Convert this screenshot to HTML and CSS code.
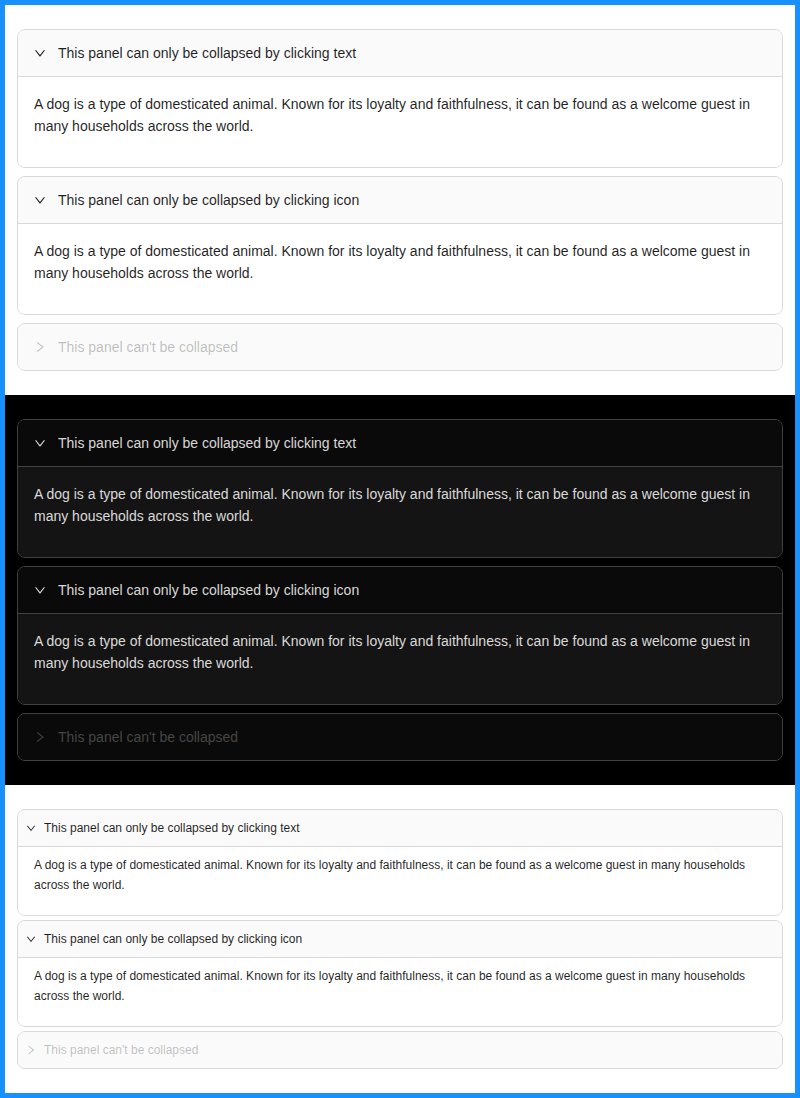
FILE: index.html
```html
<!DOCTYPE html>
<html>
<head>
<meta charset="utf-8">
<link rel="stylesheet" href="styles.css">
</head>
<body>
<div class="frame">
  <section class="demo light">
    <div class="panel">
      <div class="header"><svg class="arrow open" viewBox="64 64 896 896"><path d="M765.7 486.8L314.9 134.7A7.97 7.97 0 00302 141v77.3c0 4.9 2.3 9.6 6.1 12.6l360 281.1-360 281.1c-3.9 3-6.1 7.7-6.1 12.6V883c0 6.7 7.7 10.4 12.9 6.3l450.8-352.1a31.96 31.96 0 000-50.4z"/></svg><span>This panel can only be collapsed by clicking text</span></div>
      <div class="content"><p>A dog is a type of domesticated animal. Known for its loyalty and faithfulness, it can be found as a welcome guest in many households across the world.</p></div>
    </div>
    <div class="panel">
      <div class="header"><svg class="arrow open" viewBox="64 64 896 896"><path d="M765.7 486.8L314.9 134.7A7.97 7.97 0 00302 141v77.3c0 4.9 2.3 9.6 6.1 12.6l360 281.1-360 281.1c-3.9 3-6.1 7.7-6.1 12.6V883c0 6.7 7.7 10.4 12.9 6.3l450.8-352.1a31.96 31.96 0 000-50.4z"/></svg><span>This panel can only be collapsed by clicking icon</span></div>
      <div class="content"><p>A dog is a type of domesticated animal. Known for its loyalty and faithfulness, it can be found as a welcome guest in many households across the world.</p></div>
    </div>
    <div class="panel disabled">
      <div class="header"><svg class="arrow" viewBox="64 64 896 896"><path d="M765.7 486.8L314.9 134.7A7.97 7.97 0 00302 141v77.3c0 4.9 2.3 9.6 6.1 12.6l360 281.1-360 281.1c-3.9 3-6.1 7.7-6.1 12.6V883c0 6.7 7.7 10.4 12.9 6.3l450.8-352.1a31.96 31.96 0 000-50.4z"/></svg><span>This panel can't be collapsed</span></div>
    </div>
  </section>

  <section class="demo dark">
    <div class="panel">
      <div class="header"><svg class="arrow open" viewBox="64 64 896 896"><path d="M765.7 486.8L314.9 134.7A7.97 7.97 0 00302 141v77.3c0 4.9 2.3 9.6 6.1 12.6l360 281.1-360 281.1c-3.9 3-6.1 7.7-6.1 12.6V883c0 6.7 7.7 10.4 12.9 6.3l450.8-352.1a31.96 31.96 0 000-50.4z"/></svg><span>This panel can only be collapsed by clicking text</span></div>
      <div class="content"><p>A dog is a type of domesticated animal. Known for its loyalty and faithfulness, it can be found as a welcome guest in many households across the world.</p></div>
    </div>
    <div class="panel">
      <div class="header"><svg class="arrow open" viewBox="64 64 896 896"><path d="M765.7 486.8L314.9 134.7A7.97 7.97 0 00302 141v77.3c0 4.9 2.3 9.6 6.1 12.6l360 281.1-360 281.1c-3.9 3-6.1 7.7-6.1 12.6V883c0 6.7 7.7 10.4 12.9 6.3l450.8-352.1a31.96 31.96 0 000-50.4z"/></svg><span>This panel can only be collapsed by clicking icon</span></div>
      <div class="content"><p>A dog is a type of domesticated animal. Known for its loyalty and faithfulness, it can be found as a welcome guest in many households across the world.</p></div>
    </div>
    <div class="panel disabled">
      <div class="header"><svg class="arrow" viewBox="64 64 896 896"><path d="M765.7 486.8L314.9 134.7A7.97 7.97 0 00302 141v77.3c0 4.9 2.3 9.6 6.1 12.6l360 281.1-360 281.1c-3.9 3-6.1 7.7-6.1 12.6V883c0 6.7 7.7 10.4 12.9 6.3l450.8-352.1a31.96 31.96 0 000-50.4z"/></svg><span>This panel can't be collapsed</span></div>
    </div>
  </section>

  <section class="demo light small">
    <div class="panel">
      <div class="header"><svg class="arrow open" viewBox="64 64 896 896"><path d="M765.7 486.8L314.9 134.7A7.97 7.97 0 00302 141v77.3c0 4.9 2.3 9.6 6.1 12.6l360 281.1-360 281.1c-3.9 3-6.1 7.7-6.1 12.6V883c0 6.7 7.7 10.4 12.9 6.3l450.8-352.1a31.96 31.96 0 000-50.4z"/></svg><span>This panel can only be collapsed by clicking text</span></div>
      <div class="content"><p>A dog is a type of domesticated animal. Known for its loyalty and faithfulness, it can be found as a welcome guest in many households across the world.</p></div>
    </div>
    <div class="panel">
      <div class="header"><svg class="arrow open" viewBox="64 64 896 896"><path d="M765.7 486.8L314.9 134.7A7.97 7.97 0 00302 141v77.3c0 4.9 2.3 9.6 6.1 12.6l360 281.1-360 281.1c-3.9 3-6.1 7.7-6.1 12.6V883c0 6.7 7.7 10.4 12.9 6.3l450.8-352.1a31.96 31.96 0 000-50.4z"/></svg><span>This panel can only be collapsed by clicking icon</span></div>
      <div class="content"><p>A dog is a type of domesticated animal. Known for its loyalty and faithfulness, it can be found as a welcome guest in many households across the world.</p></div>
    </div>
    <div class="panel disabled">
      <div class="header"><svg class="arrow" viewBox="64 64 896 896"><path d="M765.7 486.8L314.9 134.7A7.97 7.97 0 00302 141v77.3c0 4.9 2.3 9.6 6.1 12.6l360 281.1-360 281.1c-3.9 3-6.1 7.7-6.1 12.6V883c0 6.7 7.7 10.4 12.9 6.3l450.8-352.1a31.96 31.96 0 000-50.4z"/></svg><span>This panel can't be collapsed</span></div>
    </div>
  </section>
</div>
</body>
</html>
```

FILE: styles.css
```css
* { box-sizing: border-box; }
html, body { margin: 0; padding: 0; }
body {
  font-family: "Liberation Sans", Arial, sans-serif;
  font-size: 14px;
  line-height: 22px;
  background: #fff;
}
.frame {
  width: 800px;
  height: 1098px;
  border: 5px solid #1890ff;
  background: #fff;
}
.demo {
  display: flex;
  flex-direction: column;
  gap: 8px;
  padding: 24px 12px;
}
.panel {
  border: 1px solid #d9d9d9;
  border-radius: 8px;
  overflow: hidden;
}
.header {
  display: flex;
  align-items: center;
  padding: 12px 16px;
  background: #fafafa;
  color: rgba(0, 0, 0, 0.88);
}
.arrow {
  width: 12px;
  height: 12px;
  margin-right: 12px;
  fill: currentColor;
  flex: none;
}
.arrow.open { transform: rotate(90deg); }
.content {
  border-top: 1px solid #d9d9d9;
  background: #fff;
  color: rgba(0, 0, 0, 0.88);
  padding: 16px;
}
.content p { margin: 0 0 14px; }
.disabled .header { color: rgba(0, 0, 0, 0.25); }

.dark { background: #000; }
.dark .panel { border-color: #424242; }
.dark .header { background: #0a0a0a; color: rgba(255, 255, 255, 0.85); }
.dark .content { background: #141414; border-top-color: #424242; color: rgba(255, 255, 255, 0.85); }
.dark .disabled .header { color: rgba(255, 255, 255, 0.25); }

.small { gap: 4px; font-size: 12px; line-height: 20px; }
.small .header { padding: 8px 8px; }
.small .arrow { width: 10px; height: 10px; margin-right: 8px; }
.small .content { padding: 8px 16px; }
.small .content p { margin: 0 0 12px; }
```
